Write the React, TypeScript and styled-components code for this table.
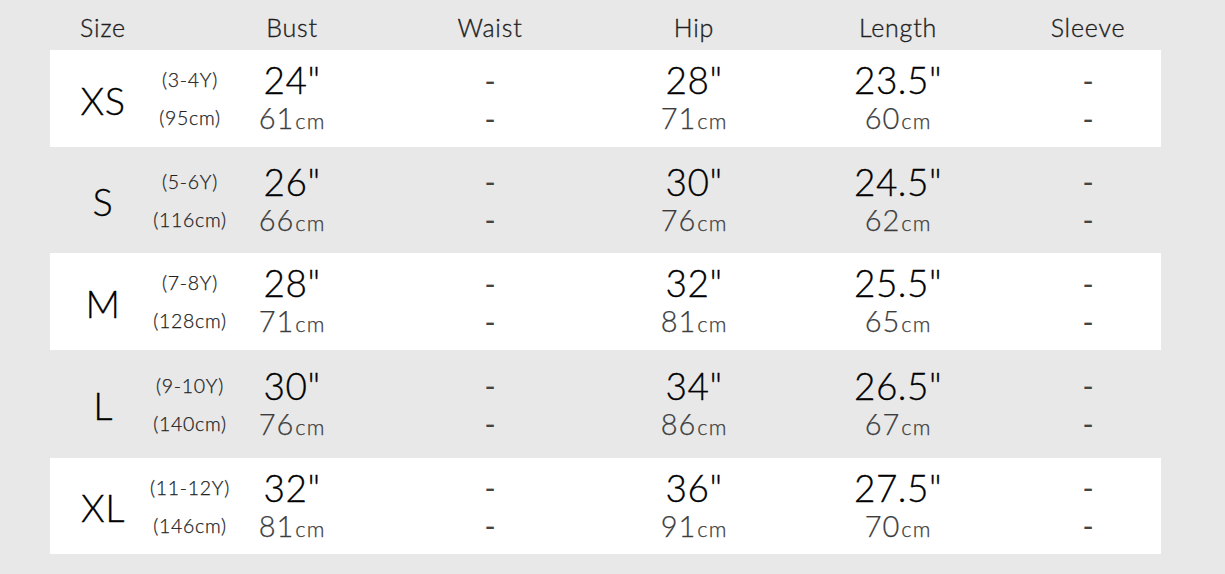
import React from "react";
import styled, { createGlobalStyle } from "styled-components";

const Global = createGlobalStyle`
  html, body { margin: 0; padding: 0; background: #e8e8e8; }
  body { font-family: Lato, "Open Sans", sans-serif; font-weight: 300; }
`;

const Page = styled.div`
  width: 1225px;
  height: 574px;
  background: #e8e8e8;
  padding: 0 64px 0 50px;
  box-sizing: border-box;
`;

const cols = `106px 68px 136px 260px 148px 260px 120px`;

const HeaderRow = styled.div`
  display: grid;
  grid-template-columns: ${cols};
  height: 50px;
  align-items: center;
  padding-top: 4px;
  box-sizing: border-box;
`;

const HeadCell = styled.div<{ $col?: number }>`
  grid-column: ${(p) => p.$col ?? "auto"};
  text-align: center;
  font-size: 25px;
  font-weight: 300;
  color: #1e1e1e;
  letter-spacing: 0.8px;
  -webkit-text-stroke: 0.35px #1e1e1e;
`;

const Row = styled.div<{ $white: boolean; $h: number }>`
  display: grid;
  grid-template-columns: ${cols};
  height: ${(p) => p.$h}px;
  background: ${(p) => (p.$white ? "#ffffff" : "transparent")};
  align-items: center;
`;

const SizeCell = styled.div`
  text-align: center;
  font-size: 38px;
  font-weight: 300;
  color: #000;
  padding-top: 2px;
  letter-spacing: 0.5px;
  -webkit-text-stroke: 0.3px #000;
`;

const Stack = styled.div`
  display: flex;
  flex-direction: column;
  align-items: center;
  justify-content: center;
`;

const Line = styled.div`
  height: 38px;
  display: flex;
  align-items: center;
  justify-content: center;
  white-space: nowrap;
`;

const Age = styled.span`
  font-size: 19.5px;
  font-weight: 300;
  color: #222;
  letter-spacing: 0.7px;
  -webkit-text-stroke: 0.25px #222;
`;

const Inch = styled.span`
  font-size: 37px;
  color: #000;
  font-weight: 300;
  letter-spacing: 0.5px;
  -webkit-text-stroke: 0.3px #000;
`;

const Cm = styled.span`
  font-size: 29px;
  color: #3c3c3c;
  letter-spacing: 1px;
  -webkit-text-stroke: 0.25px #3c3c3c;
`;

const CmUnit = styled.span`
  font-size: 22px;
  margin-left: 1px;
`;

const Dash = styled.span`
  font-size: 30px;
  font-weight: 400;
  color: #444;
`;

type R = {
  size: string;
  age: string;
  h: string;
  bust: [string, string];
  hip: [string, string];
  len: [string, string];
  height: number;
};

const rows: R[] = [
  { size: "XS", age: "(3-4Y)", h: "(95cm)", bust: ["24", "61"], hip: ["28", "71"], len: ["23.5", "60"], height: 97 },
  { size: "S", age: "(5-6Y)", h: "(116cm)", bust: ["26", "66"], hip: ["30", "76"], len: ["24.5", "62"], height: 106 },
  { size: "M", age: "(7-8Y)", h: "(128cm)", bust: ["28", "71"], hip: ["32", "81"], len: ["25.5", "65"], height: 97 },
  { size: "L", age: "(9-10Y)", h: "(140cm)", bust: ["30", "76"], hip: ["34", "86"], len: ["26.5", "67"], height: 108 },
  { size: "XL", age: "(11-12Y)", h: "(146cm)", bust: ["32", "81"], hip: ["36", "91"], len: ["27.5", "70"], height: 96 },
];

const Measure = ({ v }: { v: [string, string] }) => (
  <Stack>
    <Line>
      <Inch>{v[0]}"</Inch>
    </Line>
    <Line>
      <Cm>
        {v[1]}
        <CmUnit>cm</CmUnit>
      </Cm>
    </Line>
  </Stack>
);

const Dashes = () => (
  <Stack>
    <Line>
      <Dash>-</Dash>
    </Line>
    <Line>
      <Dash>-</Dash>
    </Line>
  </Stack>
);

export default function App() {
  return (
    <Page>
      <Global />
      <HeaderRow>
        <HeadCell $col={1}>Size</HeadCell>
        <HeadCell $col={3}>Bust</HeadCell>
        <HeadCell $col={4}>Waist</HeadCell>
        <HeadCell $col={5}>Hip</HeadCell>
        <HeadCell $col={6}>Length</HeadCell>
        <HeadCell $col={7}>Sleeve</HeadCell>
      </HeaderRow>
      {rows.map((r, i) => (
        <Row key={r.size} $white={i % 2 === 0} $h={r.height}>
          <SizeCell>{r.size}</SizeCell>
          <Stack>
            <Line>
              <Age>{r.age}</Age>
            </Line>
            <Line>
              <Age>{r.h}</Age>
            </Line>
          </Stack>
          <Measure v={r.bust} />
          <Dashes />
          <Measure v={r.hip} />
          <Measure v={r.len} />
          <Dashes />
        </Row>
      ))}
    </Page>
  );
}
